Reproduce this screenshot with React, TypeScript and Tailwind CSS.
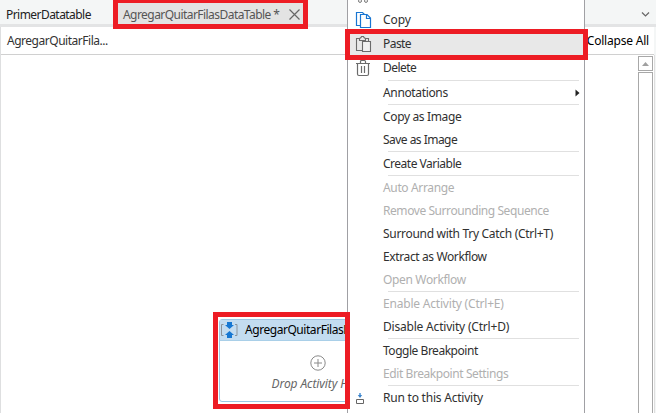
import type { ReactNode } from "react";

type Entry =
  | { kind: "sep" }
  | { kind: "item"; label: string; tracking: string; icon?: ReactNode; tall?: boolean; disabled?: boolean; active?: boolean; submenu?: boolean };

const CopyIcon = () => (
  <svg width="18" height="18" viewBox="0 0 18 18" fill="none" stroke="#1976d2" strokeWidth="1.2">
    <path d="M5.5 14.5H1.5V1.5H7.5L9.5 3.500" />
    <path d="M5.5 3.5H12L15.5 7V16.5H5.5Z" fill="#fff" />
    <path d="M11.5 3.5V7.5H15.5" />
  </svg>
);

const PasteIcon = () => (
  <svg width="18" height="18" viewBox="0 0 18 18" fill="none" stroke="#6b6b6b" strokeWidth="1.1">
    <path d="M7.500 15.500H1.500V3.500H4.500M10.500 3.500H13.500V6.500" />
    <path d="M4.500 5.500V3.500L6 2.500L6.500 1.500H8.500L9 2.500L10.500 3.500V5.500Z" />
    <path d="M7.500 6.500H15.500V16.500H7.500Z" fill="#f1f1f1" />
  </svg>
);

const TrashIcon = () => (
  <svg width="18" height="18" viewBox="0 0 18 18" fill="none" stroke="#6b6b6b" strokeWidth="1.2">
    <path d="M1 4.500H15M5.500 4.500V2.500Q5.500 1.500 6.500 1.500H9.500Q10.500 1.500 10.500 2.500V4.500M2.500 4.500V15Q2.500 16.500 4 16.500H12Q13.500 16.500 13.500 15V4.500M6.500 7V14M9.500 7V14" />
  </svg>
);

const RunIcon = () => (
  <svg width="18" height="18" viewBox="0 0 18 18" fill="none">
    <path d="M1.500 10.500H8.500V14.500H1.500Z" stroke="#666" />
    <path d="M5 4V8" stroke="#4a90d6" strokeWidth="1.500" />
    <path d="M2.800 6H7.200L5 9Z" fill="#3d85cc" />
  </svg>
);

const entries: Entry[] = [
  { kind: "item", label: "Copy", tracking: "tracking-[-0.1px]", tall: true, icon: <CopyIcon /> },
  { kind: "item", label: "Paste", tracking: "tracking-[-0.55px]", tall: true, active: true, icon: <PasteIcon /> },
  { kind: "item", label: "Delete", tracking: "tracking-[-0.55px]", tall: true, icon: <TrashIcon /> },
  { kind: "sep" },
  { kind: "item", label: "Annotations", tracking: "tracking-[-0.35px]", submenu: true },
  { kind: "sep" },
  { kind: "item", label: "Copy as Image", tracking: "tracking-[-0.35px]" },
  { kind: "item", label: "Save as Image", tracking: "tracking-[-0.53px]" },
  { kind: "sep" },
  { kind: "item", label: "Create Variable", tracking: "tracking-[-0.5px]" },
  { kind: "sep" },
  { kind: "item", label: "Auto Arrange", tracking: "tracking-[-0.35px]", disabled: true },
  { kind: "item", label: "Remove Surrounding Sequence", tracking: "tracking-[-0.43px]", disabled: true },
  { kind: "item", label: "Surround with Try Catch (Ctrl+T)", tracking: "tracking-[-0.3px]" },
  { kind: "item", label: "Extract as Workflow", tracking: "tracking-[-0.38px]" },
  { kind: "item", label: "Open Workflow", tracking: "tracking-[-0.35px]", disabled: true },
  { kind: "sep" },
  { kind: "item", label: "Enable Activity (Ctrl+E)", tracking: "tracking-[-0.2px]", disabled: true },
  { kind: "item", label: "Disable Activity (Ctrl+D)", tracking: "tracking-[-0.2px]" },
  { kind: "sep" },
  { kind: "item", label: "Toggle Breakpoint", tracking: "tracking-[-0.47px]" },
  { kind: "item", label: "Edit Breakpoint Settings", tracking: "tracking-[-0.42px]", disabled: true },
  { kind: "sep" },
  { kind: "item", label: "Run to this Activity", tracking: "tracking-[-0.22px]", icon: <RunIcon /> },
];

function MenuEntry({ entry }: { entry: Entry }) {
  if (entry.kind === "sep") return <div className="ml-10 mr-[5px] h-px bg-[#e0e0e0]" />;
  return (
    <div
      className={`flex items-center ${entry.tall ? "h-6" : "h-[23px]"} ${entry.active ? "bg-[#e8e8e8]" : ""} ${entry.disabled ? "text-[#b0b0b0]" : "text-[#303030]"}`}
    >
      <span className="ml-[7px] w-7">{entry.icon}</span>
      <span className={entry.tracking}>{entry.label}</span>
      {entry.submenu && (
        <svg className="ml-auto mr-1" width="5" height="8" viewBox="0 0 5 8">
          <path d="M0.500 0.500L4.500 4L0.500 7.500Z" fill="#222" />
        </svg>
      )}
    </div>
  );
}

function ContextMenu() {
  return (
    <div className="absolute top-0 left-[347px] h-[413px] w-[238px] overflow-hidden border-x border-[#a0a0a4] bg-white">
      <svg className="block" width="40" height="8" viewBox="0 0 40 8" fill="none" stroke="#777">
        <circle cx="12" cy="0.900" r="1.500" />
        <circle cx="18" cy="0.900" r="1.500" />
      </svg>
      {entries.map((entry, i) => (
        <MenuEntry key={i} entry={entry} />
      ))}
    </div>
  );
}

function ActivityCard() {
  return (
    <div className="absolute top-[319px] left-[219px] flex h-[83px] w-[198px] flex-col rounded-[3px] border border-[#9cc8e4] bg-white">
      <div className="flex h-[21px] shrink-0 items-center border-b border-[#a9cfe8] bg-[#c3dcf0] text-black">
        <svg className="ml-px" width="17" height="18" viewBox="0 0 17 18" fill="none">
          <path d="M2.500 3.500H0.500V14.500H2.500M14 3.500H16V14.500H14" stroke="#8b9299" />
          <path d="M6 1H11V4H13L8.500 8L4 4H6ZM6 17H11V14H13L8.500 10L4 14H6Z" fill="#1677d2" />
        </svg>
        <span className="ml-[7px] tracking-[-0.45px] whitespace-nowrap">AgregarQuitarFilasDataTable</span>
      </div>
      <div className="flex flex-col items-center pt-[14px] text-[#666]">
        <svg width="16" height="16" viewBox="0 0 16 16" fill="none" stroke="#8a8a8a">
          <circle cx="8" cy="8" r="7.200" />
          <path d="M8 4V12M4 8H12" />
        </svg>
        <span className="mt-[5px] text-[12px] leading-4 tracking-[-0.1px] italic">Drop Activity Here</span>
      </div>
    </div>
  );
}

export default function App() {
  return (
    <div className="relative flex h-[413px] w-[656px] flex-col overflow-hidden bg-[#f4f6f6] font-['Noto_Sans',sans-serif] text-[12px] leading-4">
      <header className="flex h-[27px] shrink-0 border-b-[3px] border-[#e3e4e5] text-[#222]">
        <span className="w-[115px] pt-[7px] pl-1.5 tracking-[-0.55px]">PrimerDatatable</span>
        <div className="flex h-[27px] w-[191px] bg-[#e3e3e3] pt-[7px] pl-2 text-[#555]">
          <span className="w-[166px] tracking-[-0.55px] whitespace-nowrap">AgregarQuitarFilasDataTable *</span>
          <svg className="mt-[2px]" width="11" height="11" viewBox="0 0 11 11" stroke="#666" strokeWidth="1.200">
            <path d="M0.500 0.500L10.500 10.500M10.500 0.500L0.500 10.500" />
          </svg>
        </div>
        <svg className="mt-3 mr-1.5 ml-auto" width="9" height="6" viewBox="0 0 9 6" fill="none" stroke="#666" strokeWidth="1.200">
          <path d="M1 0.500L4.500 4L8 0.500" />
        </svg>
      </header>
      <div className="flex min-h-0 flex-1 flex-col border-l border-[#dedfe0]">
        <div className="mr-[2px] flex h-7 shrink-0 justify-between border-b border-[#d0d0d0] bg-white pt-[6px] pr-[5px] pl-1.5">
          <span className="tracking-[-0.48px] text-[#333]">AgregarQuitarFila...</span>
          <span className="tracking-[-0.2px] text-black">Collapse All</span>
        </div>
        <div className="mr-px flex flex-1 justify-end border-r border-[#dedede] bg-white pt-px">
          <div className="mr-px flex w-[15px] flex-col">
            <div className="flex h-[15px] items-center justify-center border border-[#a8a8a8]">
              <svg width="7" height="4" viewBox="0 0 7 4">
                <path d="M3.500 0L7 4H0Z" fill="#a0a0a0" />
              </svg>
            </div>
            <div className="mt-px flex-1 border-x border-t border-[#a8a8a8]" />
          </div>
        </div>
      </div>
      <ActivityCard />
      <ContextMenu />
      <div className="absolute -top-[2px] left-[113px] h-[31px] w-[195px] border-[5px] border-[#ed1c24]" />
      <div className="absolute top-[29px] left-[345px] h-[31px] w-[243px] border-[5px] border-[#ed1c24]" />
      <div className="absolute top-[312px] left-[213px] h-[97px] w-[137px] border-[5px] border-[#ed1c24]" />
    </div>
  );
}
